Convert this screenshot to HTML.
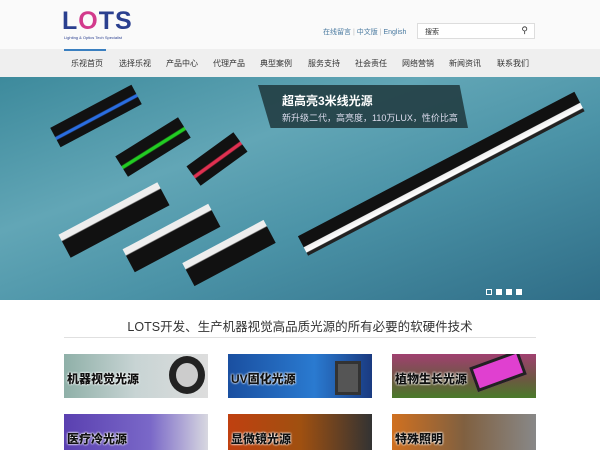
<!DOCTYPE html><html><head><meta charset="utf-8"><style>
*{margin:0;padding:0;box-sizing:border-box}
body{width:600px;height:450px;overflow:hidden;background:#fff;font-family:"Liberation Sans","Noto Sans CJK SC",sans-serif;position:relative}
.hdr{position:absolute;left:0;top:0;width:600px;height:49px;background:#fafafa}
.nav{position:absolute;left:0;top:49px;width:600px;height:28px;background:#efefef}
.nav span{position:absolute;top:9px;font-size:8px;color:#333}
.ban{position:absolute;left:0;top:77px;width:600px;height:223px;background:linear-gradient(160deg,#3d8a9c 0%,#62a6b6 35%,#4b93a7 60%,#2f6d87 100%);overflow:hidden}
.a{position:absolute}
.tile{position:absolute;width:144px;height:44px;overflow:hidden;color:#111;font-size:12px;font-weight:bold;text-shadow:0 0 2px #fff,0 0 2px #fff}
.tile b{position:absolute;left:3px;top:16px}
</style></head><body>
<div class="hdr"></div>
<div class="a" style="left:62px;top:7px;font:bold 25px 'Liberation Sans',sans-serif;color:#2a3f8f;letter-spacing:1px;line-height:28px">L<span style="color:#d23a8c">O</span>TS</div>
<div class="a" style="left:64px;top:35px;font-size:4px;color:#2a3f8f">Lighting &amp; Optics Tech Specialist</div>
<div class="a" style="left:323px;top:27px;font-size:7px;color:#4a7aa0">在线留言 <span style="color:#bbb">|</span> 中文版 <span style="color:#bbb">|</span> English</div>
<div class="a" style="left:417px;top:23px;width:118px;height:16px;border:1px solid #ddd;background:#fff;font-size:7px;padding:3px 0 0 7px;color:#333">搜索<span style="position:absolute;right:6px;top:1px;font-size:9px">⚲</span></div>
<div class="nav"></div>
<div class="a" style="left:64px;top:49px;width:42px;height:2px;background:#3a7fc0"></div>
<div class="nav" style="background:none">
<span style="left:71px">乐视首页</span><span style="left:119px">选择乐视</span><span style="left:166px">产品中心</span><span style="left:213px">代理产品</span><span style="left:260px">典型案例</span><span style="left:308px">服务支持</span><span style="left:355px">社会责任</span><span style="left:402px">网络营销</span><span style="left:449px">新闻资讯</span><span style="left:497px">联系我们</span></div>
<div class="ban">
<div class="a" style="left:258px;top:8px;width:210px;height:43px;background:rgba(30,55,60,.85);clip-path:polygon(0 0,96% 0,100% 100%,6% 100%)"></div>
<div class="a" style="left:282px;top:15px;color:#fff;font-size:12px;font-weight:bold">超高亮3米线光源</div>
<div class="a" style="left:282px;top:34px;color:#dde;font-size:9px">新升级二代，高亮度，110万LUX，性价比高</div>
<div class="a" style="width:312px;height:22px;background:linear-gradient(#111 55%,#eee 58%,#fff 82%,#222 86%);transform:rotate(-27.6deg);transform-origin:0 50%;top:158px;left:303px"></div>
<div class="a" style="left:50px;top:28px;width:92px;height:22px;background:linear-gradient(#111 45%,#2a6de0 50%,#2a6de0 60%,#111 65%);transform:rotate(-28deg)"></div>
<div class="a" style="left:116px;top:58px;width:74px;height:24px;background:linear-gradient(#111 45%,#2c2 50%,#2c2 60%,#111 65%);transform:rotate(-32deg)"></div>
<div class="a" style="left:188px;top:70px;width:58px;height:24px;background:linear-gradient(#111 45%,#e03050 50%,#e03050 60%,#111 65%);transform:rotate(-36deg)"></div>
<div class="a" style="left:58px;top:130px;width:112px;height:26px;background:linear-gradient(#eee 25%,#111 30%);transform:rotate(-28deg)"></div>
<div class="a" style="left:123px;top:148px;width:97px;height:26px;background:linear-gradient(#eee 25%,#111 30%);transform:rotate(-28deg)"></div>
<div class="a" style="left:183px;top:163px;width:92px;height:26px;background:linear-gradient(#eee 25%,#111 30%);transform:rotate(-28deg)"></div>
<div class="a" style="left:486px;top:212px;width:6px;height:6px;border:1px solid #fff"></div>
<div class="a" style="left:496px;top:212px;width:6px;height:6px;background:#fff"></div>
<div class="a" style="left:506px;top:212px;width:6px;height:6px;background:#fff"></div>
<div class="a" style="left:516px;top:212px;width:6px;height:6px;background:#fff"></div>
</div>
<div class="a" style="left:0;top:316px;width:600px;text-align:center;font-size:12.5px;color:#333">LOTS开发、生产机器视觉高品质光源的所有必要的软硬件技术</div>
<div class="a" style="left:64px;top:337px;width:472px;height:1px;background:#e0e0e0"></div>
<div class="tile" style="left:64px;top:354px;background:linear-gradient(90deg,#8fb0a8,#c8d4d4 50%,#ddd)"><b>机器视觉光源</b><div class="a" style="left:105px;top:2px;width:36px;height:38px;border-radius:50%;border:7px solid #222;background:#ccc"></div></div>
<div class="tile" style="left:228px;top:354px;background:linear-gradient(90deg,#1a4fa0,#2a7ad0 60%,#1a3a80)"><b>UV固化光源</b><div class="a" style="left:107px;top:7px;width:26px;height:34px;background:#555;border:3px solid #333"></div></div>
<div class="tile" style="left:392px;top:354px;background:linear-gradient(#a04070,#6a5a40 60%,#4a7a2a)"><b>植物生长光源</b><div class="a" style="left:80px;top:4px;width:52px;height:26px;background:#e040d0;border:3px solid #222;transform:rotate(-20deg)"></div></div>
<div class="tile" style="left:64px;top:414px;height:36px;background:linear-gradient(90deg,#5a40b0,#7a68c8 60%,#d8d8e0)"><b>医疗冷光源</b></div>
<div class="tile" style="left:228px;top:414px;height:36px;background:linear-gradient(90deg,#c04010,#a05010 50%,#333)"><b>显微镜光源</b></div>
<div class="tile" style="left:392px;top:414px;height:36px;background:linear-gradient(90deg,#d07020,#806040 50%,#888)"><b>特殊照明</b></div>
</body></html>
